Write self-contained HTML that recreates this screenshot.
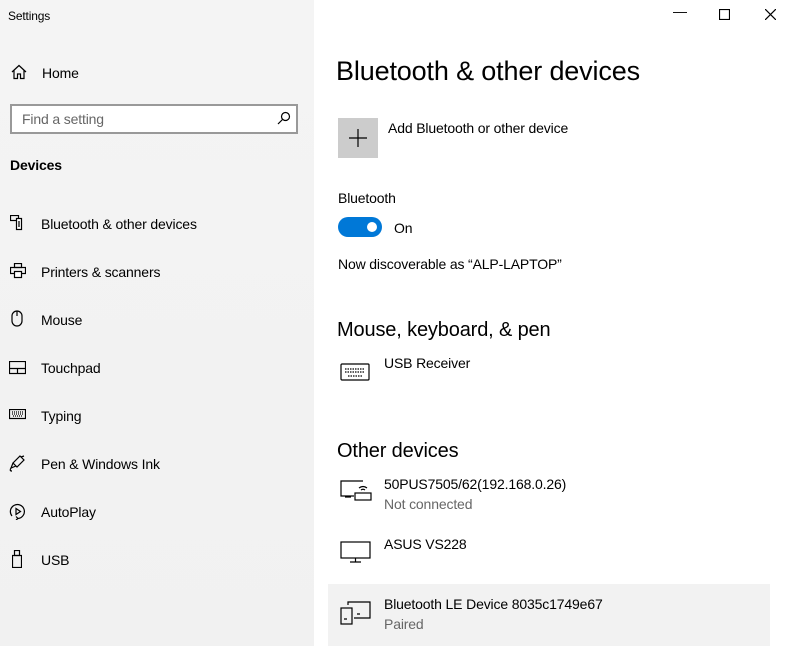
<!DOCTYPE html>
<html><head><meta charset="utf-8"><style>
*{margin:0;padding:0;box-sizing:border-box}
body{width:786px;height:646px;overflow:hidden;background:#fff;font-family:"Liberation Sans",sans-serif;color:#000;position:relative}
.side{position:absolute;left:0;top:0;width:314px;height:646px;background:linear-gradient(180deg,#f4f4f4,#f1f1f1)}
.t{position:absolute;white-space:nowrap;letter-spacing:-0.15px}
svg{position:absolute;fill:none;stroke:#000;stroke-width:1.2}
.nav{font-size:14px;left:41px}
.g{color:#666}
</style></head><body>
<div class="side">
<div class="t" style="left:8px;top:9px;font-size:12px">Settings</div>
<svg style="left:11px;top:64px" width="16" height="16" viewBox="0 0 16 16"><path d="M1 8L8 1.5 15 8M3 6.5V14.5H6.5V10H9.5V14.5H13V6.5"/></svg>
<div class="t" style="left:42px;top:65px;font-size:14px">Home</div>
<div style="position:absolute;left:10px;top:104px;width:288px;height:30px;border:2px solid #999;background:#fff"></div>
<div class="t" style="left:22px;top:111px;font-size:14px;color:#666">Find a setting</div>
<svg style="left:277px;top:111px" width="14" height="14" viewBox="0 0 14 14" stroke="#777"><circle cx="8.5" cy="5.5" r="4"/><path d="M5.5 8.5L1 13"/></svg>
<div class="t" style="left:10px;top:157px;font-size:14px;font-weight:bold">Devices</div>
<svg style="left:10px;top:215px" width="16" height="16" viewBox="0 0 16 16"><rect x="0.5" y="0.5" width="8" height="5"/><rect x="6.5" y="3.5" width="5" height="11" fill="#fff"/><path d="M8 7h2M8 9h2M8 11h2"/></svg>
<div class="t nav" style="top:216px">Bluetooth &amp; other devices</div>
<svg style="left:10px;top:263px" width="16" height="16" viewBox="0 0 16 16"><rect x="4.5" y="0.5" width="7" height="4"/><rect x="0.5" y="4.5" width="15" height="6"/><rect x="4.5" y="8.5" width="7" height="6" fill="#fff"/></svg>
<div class="t nav" style="top:264px">Printers &amp; scanners</div>
<svg style="left:11px;top:310px" width="12" height="17" viewBox="0 0 12 17"><rect x="1" y="1" width="10" height="15" rx="5"/><path d="M6 1v5"/></svg>
<div class="t nav" style="top:312px">Mouse</div>
<svg style="left:9px;top:361px" width="17" height="14" viewBox="0 0 17 14"><rect x="0.5" y="0.5" width="16" height="12"/><path d="M0.5 7.5h16M8.5 7.5v5"/></svg>
<div class="t nav" style="top:360px">Touchpad</div>
<svg style="left:9px;top:409px" width="17" height="11" viewBox="0 0 17 11"><rect x="0.5" y="0.5" width="16" height="9"/><path d="M3 3h11M3 5h11M4 7h9" stroke-dasharray="1 1"/></svg>
<div class="t nav" style="top:408px">Typing</div>
<svg style="left:9px;top:455px" width="16" height="17" viewBox="0 0 16 17"><path d="M11 1l4 4-7 7-4-4zM4 8l-2 5 5-2M2 13q-2 3 1 3M12 2l3-1"/></svg>
<div class="t nav" style="top:456px">Pen &amp; Windows Ink</div>
<svg style="left:9px;top:503px" width="17" height="17" viewBox="0 0 17 17"><path d="M3 13A7 7 0 1 1 9 15.5M9 15.5l-2-2M9 15.5l-2 1.5"/><path d="M7 5.5v6l4.5-3z"/></svg>
<div class="t nav" style="top:504px">AutoPlay</div>
<svg style="left:12px;top:550px" width="10" height="18" viewBox="0 0 10 18"><rect x="2.5" y="0.5" width="5" height="5"/><rect x="0.5" y="5.5" width="9" height="12"/></svg>
<div class="t nav" style="top:552px">USB</div>
</div>
<div class="t" style="left:673px;top:3px;font-size:14px">&#8212;</div>
<svg style="left:719px;top:9px" width="11" height="11" viewBox="0 0 11 11" stroke-width="1"><rect x="0.5" y="0.5" width="10" height="10"/></svg>
<svg style="left:765px;top:9px" width="11" height="11" viewBox="0 0 11 11" stroke-width="1"><path d="M0 0L11 11M11 0L0 11"/></svg>
<div class="t" style="left:336px;top:56px;font-size:27px">Bluetooth &amp; other devices</div>
<div style="position:absolute;left:338px;top:118px;width:40px;height:40px;background:#ccc"></div>
<svg style="left:349px;top:129px" width="18" height="18" viewBox="0 0 18 18" stroke="#333" stroke-width="1"><path d="M9 0v18M0 9h18"/></svg>
<div class="t" style="left:388px;top:120px;font-size:14px">Add Bluetooth or other device</div>
<div class="t" style="left:338px;top:190px;font-size:14px">Bluetooth</div>
<div style="position:absolute;left:338px;top:217px;width:44px;height:20px;border-radius:10px;background:#0078d7"></div>
<div style="position:absolute;left:367px;top:222px;width:10px;height:10px;border-radius:5px;background:#fff"></div>
<div class="t" style="left:394px;top:220px;font-size:14px">On</div>
<div class="t" style="left:338px;top:256px;font-size:14px">Now discoverable as “ALP-LAPTOP”</div>
<div class="t" style="left:337px;top:319px;font-size:20px">Mouse, keyboard, &amp; pen</div>
<svg style="left:340px;top:363px" width="30" height="19" viewBox="0 0 30 19" stroke-width="2"><rect x="1" y="1" width="28" height="16" rx="1"/><path d="M5 6h20M5 9h20M8 13h14" stroke-dasharray="1.5 1" stroke-width="1.3"/></svg>
<div class="t" style="left:384px;top:355px;font-size:14px">USB Receiver</div>
<div class="t" style="left:337px;top:440px;font-size:20px">Other devices</div>
<svg style="left:340px;top:480px" width="32" height="22" viewBox="0 0 32 22" stroke-width="2"><path d="M14 16H1V1h22M5 17h6"/><rect x="15" y="13" width="16" height="7"/><path d="M19 8q4-3 8 0M21 10q2-1.5 4 0"/></svg>
<div class="t" style="left:384px;top:476px;font-size:14px">50PUS7505/62(192.168.0.26)</div>
<div class="t g" style="left:384px;top:496px;font-size:14px">Not connected</div>
<svg style="left:340px;top:541px" width="31" height="22" viewBox="0 0 31 22" stroke-width="2"><rect x="1" y="1" width="29" height="16"/><path d="M15.5 17v4M10 21h11"/></svg>
<div class="t" style="left:384px;top:536px;font-size:14px">ASUS VS228</div>
<div style="position:absolute;left:328px;top:584px;width:442px;height:62px;background:#f2f2f2"></div>
<svg style="left:340px;top:601px" width="32" height="24" viewBox="0 0 32 24" stroke-width="2"><path d="M8 4V1h22v16H14"/><rect x="1" y="7" width="11" height="16"/><path d="M17 13h3M4 18h3"/></svg>
<div class="t" style="left:384px;top:596px;font-size:14px">Bluetooth LE Device 8035c1749e67</div>
<div class="t g" style="left:384px;top:616px;font-size:14px">Paired</div>
</body></html>
